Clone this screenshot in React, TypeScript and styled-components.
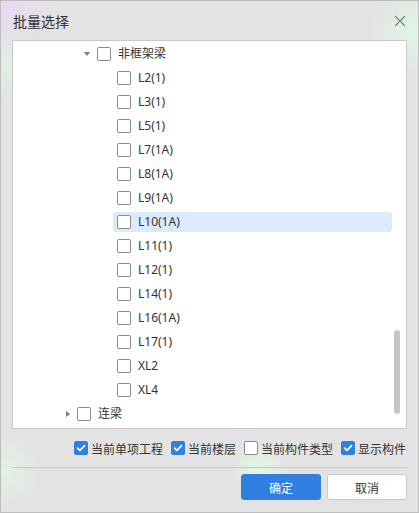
import React, { useState } from 'react';
import styled, { createGlobalStyle } from 'styled-components';

const GlobalStyle = createGlobalStyle`
  html, body {
    margin: 0;
    padding: 0;
  }
  body {
    font-family: "Noto Sans", "Noto Sans CJK SC", sans-serif;
    color: #333;
  }
`;

const Dialog = styled('div')({
  width: '419px',
  height: '513px',
  boxSizing: 'border-box',
  border: '1px solid #bdbdbd',
  display: 'flex',
  flexDirection: 'column',
  padding: '0 11px 12px',
  backgroundColor: '#e3e3e3',
  backgroundImage: [
    'radial-gradient(circle at 0% 0%, rgba(236, 214, 248, 0.8) 0, rgba(236, 214, 248, 0) 60px)',
    'radial-gradient(circle at 0% 12%, rgba(220, 246, 226, 0.7) 0, rgba(220, 246, 226, 0) 40px)',
    'radial-gradient(circle at 100% 6%, rgba(222, 248, 228, 0.9) 0, rgba(222, 248, 228, 0) 50px)',
    'radial-gradient(circle at 0% 92%, rgba(222, 248, 228, 0.8) 0, rgba(222, 248, 228, 0) 40px)',
    'radial-gradient(circle at 62% 92%, rgba(228, 250, 228, 0.9) 0, rgba(228, 250, 228, 0) 30px)',
    'radial-gradient(circle at 58% 82%, rgba(240, 222, 250, 0.7) 0, rgba(240, 222, 250, 0) 30px)',
  ].join(', '),
});

const Header = styled('header')({
  height: '39px',
  display: 'flex',
  alignItems: 'center',
  justifyContent: 'space-between',
  paddingLeft: '1px',
});

const Title = styled('h1')({
  margin: 0,
  fontSize: '14px',
  fontWeight: 400,
  color: '#333',
  fontFamily: '"Noto Sans CJK SC", sans-serif',
});

const CloseButton = styled('button')({
  width: '16px',
  height: '16px',
  padding: 0,
  border: 'none',
  background: 'transparent',
  display: 'flex',
  alignItems: 'center',
  justifyContent: 'center',
  marginRight: '-1px',
  cursor: 'pointer',
});

const TreePanel = styled('div')({
  position: 'relative',
  height: '389px',
  boxSizing: 'border-box',
  border: '1px solid #c9c9c9',
  backgroundColor: '#fff',
  overflow: 'hidden',
  paddingTop: '1px',
});

const ScrollThumb = styled('div')({
  position: 'absolute',
  right: '6px',
  top: '289px',
  width: '6px',
  height: '84px',
  borderRadius: '3px',
  backgroundColor: '#c6c6c6',
});

const TreeItem = styled('div')(({ level }: { level: number }) => ({
  display: 'flex',
  alignItems: 'center',
  height: '24px',
  paddingLeft: `${44 + level * 20}px`,
  paddingRight: '14px',
}));

const Toggle = styled('span')({
  width: '16px',
  flex: 'none',
  display: 'flex',
  justifyContent: 'flex-end',
  paddingRight: '3px',
  boxSizing: 'border-box',
});

const CaretDown = styled('span')({
  width: 0,
  height: 0,
  borderLeft: '3px solid transparent',
  borderRight: '3px solid transparent',
  borderTop: '4px solid #7a7a7a',
});

const CaretRight = styled('span')({
  width: 0,
  height: 0,
  borderTop: '3.5px solid transparent',
  borderBottom: '3.5px solid transparent',
  borderLeft: '4px solid #7a7a7a',
});

const Node = styled('div')(({ selected }: { selected?: boolean }) => ({
  flex: 1,
  height: '20px',
  display: 'flex',
  alignItems: 'center',
  gap: '7px',
  paddingLeft: '4px',
  borderRadius: '3px',
  backgroundColor: selected ? '#dbeafc' : 'transparent',
}));

const Box = styled('span')(({ checked }: { checked?: boolean }) => ({
  width: '14px',
  height: '14px',
  boxSizing: 'border-box',
  flex: 'none',
  borderRadius: '2px',
  border: checked ? '1px solid #2f80e0' : '1px solid #8c8c8c',
  backgroundColor: checked ? '#2f80e0' : '#fff',
  display: 'flex',
  alignItems: 'center',
  justifyContent: 'center',
}));

const Label = styled('span')({
  fontSize: '12px',
  lineHeight: '16px',
  color: '#333',
  whiteSpace: 'nowrap',
});

const Options = styled('div')({
  height: '38px',
  display: 'flex',
  alignItems: 'center',
  justifyContent: 'flex-end',
  gap: '8px',
  paddingRight: '1px',
});

const Option = styled('label')({
  display: 'flex',
  alignItems: 'center',
  gap: '3px',
  fontSize: '12px',
  color: '#333',
  fontFamily: '"Noto Sans CJK SC", sans-serif',
  whiteSpace: 'nowrap',
});

const Divider = styled('div')({
  height: '1px',
  backgroundColor: '#c8c8c8',
});

const Footer = styled('footer')({
  display: 'flex',
  justifyContent: 'flex-end',
  gap: '6px',
  marginTop: '6px',
});

const Button = styled('button')(({ primary }: { primary?: boolean }) => ({
  width: '80px',
  height: '26px',
  boxSizing: 'border-box',
  borderRadius: '3px',
  border: primary ? '1px solid #2e7fe0' : '1px solid #c9c9c9',
  backgroundColor: primary ? '#2e7fe0' : '#fff',
  color: primary ? '#fff' : '#333',
  fontSize: '12px',
  fontFamily: '"Noto Sans CJK SC", sans-serif',
  padding: 0,
  cursor: 'pointer',
}));

const Check = () => (
  <svg width="10" height="10" viewBox="0 0 10 10">
    <path d="M1.6 5.2 L4 7.5 L8.5 2.6" fill="none" stroke="#fff" strokeWidth="1.7" strokeLinecap="round" strokeLinejoin="round" />
  </svg>
);

const CheckBox = ({ checked }: { checked?: boolean }) => (
  <Box checked={checked}>{checked && <Check />}</Box>
);

const beams = [
  'L2(1)',
  'L3(1)',
  'L5(1)',
  'L7(1A)',
  'L8(1A)',
  'L9(1A)',
  'L10(1A)',
  'L11(1)',
  'L12(1)',
  'L14(1)',
  'L16(1A)',
  'L17(1)',
  'XL2',
  'XL4',
];

const options = [
  { name: '当前单项工程', checked: true },
  { name: '当前楼层', checked: true },
  { name: '当前构件类型', checked: false },
  { name: '显示构件', checked: true },
];

const App = (): JSX.Element => {
  const [selected] = useState('L10(1A)');
  return (
    <>
      <GlobalStyle />
      <Dialog>
        <Header>
          <Title>批量选择</Title>
          <CloseButton aria-label="close">
            <svg width="12" height="12" viewBox="0 0 12 12">
              <path d="M1 1 L11 11 M11 1 L1 11" stroke="#7d7d7d" strokeWidth="1.1" />
            </svg>
          </CloseButton>
        </Header>
        <TreePanel>
          <TreeItem level={1}>
            <Toggle>
              <CaretDown />
            </Toggle>
            <Node>
              <CheckBox />
              <Label>非框架梁</Label>
            </Node>
          </TreeItem>
          {beams.map((name) => (
            <TreeItem key={name} level={2}>
              <Toggle />
              <Node selected={name === selected}>
                <CheckBox />
                <Label>{name}</Label>
              </Node>
            </TreeItem>
          ))}
          <TreeItem level={0}>
            <Toggle>
              <CaretRight />
            </Toggle>
            <Node>
              <CheckBox />
              <Label>连梁</Label>
            </Node>
          </TreeItem>
          <ScrollThumb />
        </TreePanel>
        <Options>
          {options.map(({ name, checked }) => (
            <Option key={name}>
              <CheckBox checked={checked} />
              {name}
            </Option>
          ))}
        </Options>
        <Divider />
        <Footer>
          <Button primary>确定</Button>
          <Button>取消</Button>
        </Footer>
      </Dialog>
    </>
  );
};

export default App;
